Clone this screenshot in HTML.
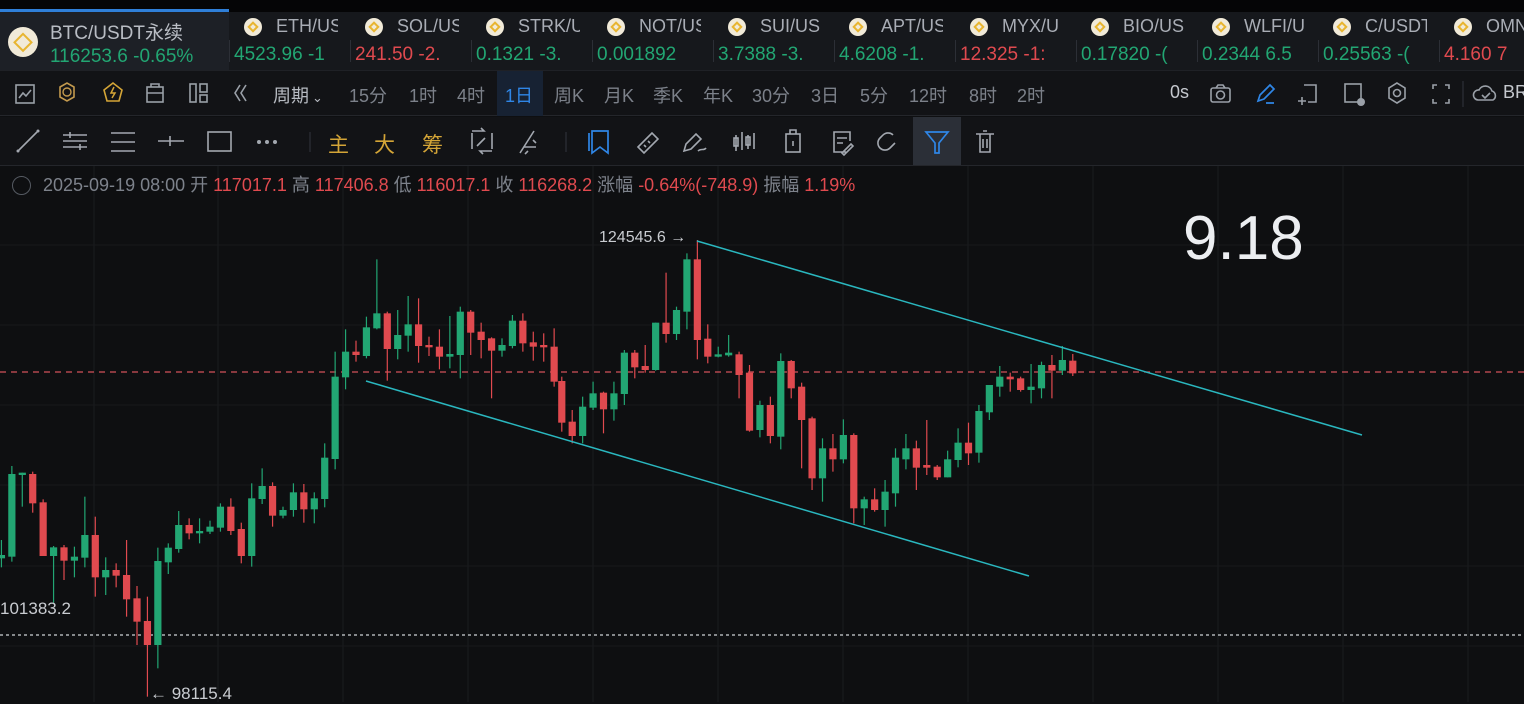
<!DOCTYPE html>
<html><head><meta charset="utf-8"><style>
*{margin:0;padding:0;box-sizing:border-box}
body{width:1524px;height:702px;overflow:hidden;background:#0e0f11;font-family:"Liberation Sans","Noto Sans CJK SC",sans-serif;color:#8b9099;position:relative}
.abs{position:absolute;white-space:nowrap}
#tabs{position:absolute;left:0;top:12px;width:1524px;height:58px;background:#16181c}
.tab{position:absolute;top:0;height:58px;overflow:hidden}
.tab .n{position:absolute;top:4px;font-size:18px;color:#a9adb5}
.tab .v{position:absolute;top:32px;font-size:19px}
.coin{position:absolute;border-radius:50%;background:#f1ead8}
.coin:after{content:"";position:absolute;left:50%;top:50%;width:45%;height:45%;transform:translate(-50%,-50%) rotate(45deg);border:2px solid #e8b530;box-sizing:border-box}
.sep{position:absolute;width:1px;background:#2c2f36}
.g{color:#22a673}.r{color:#e04a4f}
#row2{position:absolute;top:70px;left:0;width:1524px;height:46px;background:#121316;border-top:1px solid #1f2126;border-bottom:1px solid #24262b}
#row2 .t{position:absolute;top:11px;font-size:18px;color:#7c818a}
#row3{position:absolute;top:117px;left:0;width:1524px;height:49px;background:#121316;border-bottom:1px solid #24262b}
.ic{position:absolute}
</style></head><body>
<div class="abs" style="left:0;top:0;width:1524px;height:12px;background:#050506"></div>
<div id="tabs">
 <div class="tab" style="left:0;width:229px;background:#1d2026;border-top:3px solid #2f7fd8;top:-3px;height:61px">
  <div class="coin" style="left:8px;top:15px;width:30px;height:30px"></div>
  <div class="n" style="left:50px;top:6px;font-size:19px;color:#b9bdc4">BTC/USDT永续</div>
  <div class="v g" style="left:50px;top:34px">116253.6 -0.65%</div>
 </div>
</div>
<div id="row2"><div class="abs" style="left:497px;top:0;width:46px;height:45px;background:#172233"></div></div>
<div id="row3"><div class="abs" style="left:913px;top:0;width:48px;height:48px;background:#2b2f37"></div></div>
<svg id="chart" class="abs" style="left:0;top:166px" width="1524" height="536"></svg>
<div class="abs" style="left:12px;top:171px;font-size:18px;color:#7d828b"><span style="display:inline-block;width:19px;height:19px;border:1.5px solid #555a62;border-radius:50%;vertical-align:-4px;margin-right:12px"></span>2025-09-19 08:00 开 <span class="r">117017.1</span> 高 <span class="r">117406.8</span> 低 <span class="r">116017.1</span> 收 <span class="r">116268.2</span> 涨幅 <span class="r">-0.64%(-748.9)</span> 振幅 <span class="r">1.19%</span></div>
<div class="abs" style="left:599px;top:229px;font-size:16px;color:#c9ccd1">124545.6 →</div>
<div class="abs" style="left:0;top:599px;font-size:17px;color:#c9ccd1">101383.2</div>
<div class="abs" style="left:150px;top:684px;font-size:17px;color:#c9ccd1">← 98115.4</div>
<div class="abs" style="left:1183px;top:203px;font-size:62px;color:#eceef1">9.18</div>
<script>
var tabs=[["ETH/US","4523.96 -1","g"],["SOL/US","241.50 -2.","r"],["STRK/U","0.1321 -3.","g"],["NOT/US","0.001892","g"],["SUI/US","3.7388 -3.","g"],["APT/US","4.6208 -1.","g"],["MYX/U","12.325 -1:","r"],["BIO/US","0.17820 -(","g"],["WLFI/U","0.2344 6.5","g"],["C/USDT","0.25563 -(","g"],["OMN","4.160 7","r"]];
var T=document.getElementById('tabs'),h='';
tabs.forEach(function(t,i){var x=230+i*121;
h+='<div class="sep" style="left:'+(x-1)+'px;top:28px;height:22px"></div><div class="tab" style="left:'+x+'px;width:108px"><div class="coin" style="left:14px;top:6px;width:18px;height:18px"></div><div class="n" style="left:46px">'+t[0]+'</div><div class="v '+t[2]+'" style="left:4px">'+t[1]+'</div></div>';});
T.innerHTML+=h;
var R2=document.getElementById('row2');h='';
var tx=[["15分",349],["1时",409],["4时",457],["1日",505],["周K",554],["月K",604],["季K",653],["年K",703],["30分",752],["3日",811],["5分",860],["12时",909],["8时",969],["2时",1017],["0s",1170]];
tx.forEach(function(t){h+='<div class="t" style="left:'+t[1]+'px;'+(t[0]=="1日"?'color:#2f86e6':(t[0]=="0s"?'color:#c5c8ce':''))+'">'+t[0]+'</div>';});
h+='<div class="t" style="left:273px;color:#b7bbc2">周期<span style="font-size:13px;margin-left:3px">⌄</span></div>';
var s='stroke="#9aa0a8" stroke-width="1.6" fill="none"';
h+='<svg class="ic" style="left:0;top:0" width="1524" height="46">'+
'<rect x="16" y="14" width="18" height="18" '+s+'/><path d="M19 27l4-5 3 3 5-6" '+s+'/>'+
'<path d="M60 16l7-4 7 4v10l-7 4-7-4z" stroke="#c39a4e" stroke-width="1.6" fill="none"/><circle cx="67" cy="21" r="4" stroke="#c39a4e" fill="none" stroke-width="1.4"/>'+
'<path d="M104 19l9-7 9 7-3 11h-12z" stroke="#d4a537" stroke-width="1.6" fill="none"/><path d="M114 16l-3 6h4l-3 5" stroke="#d4a537" stroke-width="1.5" fill="none"/>'+
'<rect x="147" y="16" width="16" height="15" '+s+'/><path d="M147 22h16M151 16v-3h8v3" '+s+'/>'+
'<rect x="190" y="13" width="6" height="18" '+s+'/><rect x="200" y="13" width="7" height="8" '+s+'/><rect x="200" y="24" width="7" height="7" '+s+'/>'+
'<path d="M240 14l-5 8 5 8M246 14l-5 8 5 8" '+s+'/>'+
'<rect x="1211" y="17" width="19" height="14" rx="2" '+s+'/><circle cx="1220.5" cy="24" r="4" '+s+'/><path d="M1216 17l2-3h5l2 3" '+s+'/>'+
'<path d="M1258 30l2-6 10-10 4 4-10 10zM1266 32h8" stroke="#2f86e6" stroke-width="1.7" fill="none"/>'+
'<path d="M1304 14h12v17h-8M1302 26v8M1298 30h8" '+s+'/>'+
'<rect x="1345" y="13" width="16" height="18" '+s+'/><circle cx="1361" cy="31" r="4" fill="#9aa0a8"/>'+
'<path d="M1397 12l8 5v10l-8 5-8-5v-10z" '+s+'/><circle cx="1397" cy="22" r="3.5" '+s+'/>'+
'<path d="M1433 18v-4h4M1445 14h4v4M1449 28v4h-4M1437 32h-4v-4" '+s+'/>'+
'<line x1="1463" y1="10" x2="1463" y2="36" stroke="#33363d"/>'+
'<path d="M1478 29a5 5 0 0 1 1-10 7 7 0 0 1 13 1 5 5 0 0 1 1 9z" '+s+'/><path d="M1482 24l3 3 5-5" '+s+'/>'+
'</svg><div class="t" style="left:1503px;color:#c5c8ce">BR</div>';
R2.innerHTML+=h;
var R3=document.getElementById('row3');
var s3='stroke="#a3a8b0" stroke-width="1.6" fill="none"';
h='<svg class="ic" style="left:0;top:0" width="1100" height="48">'+
'<path d="M18 34l20-20" '+s3+'/><circle cx="18" cy="34" r="1.5" fill="#a3a8b0"/><circle cx="38" cy="14" r="1.5" fill="#a3a8b0"/>'+
'<path d="M63 18h24M63 24h24M63 30h24M70 15v6M80 27v6" '+s3+'/>'+
'<path d="M111 16h24M111 25h24M111 34h24" '+s3+'/>'+
'<path d="M158 24h26M170 19v10" '+s3+'/>'+
'<rect x="208" y="15" width="23" height="19" '+s3+'/>'+
'<circle cx="259" cy="25" r="2" fill="#a3a8b0"/><circle cx="267" cy="25" r="2" fill="#a3a8b0"/><circle cx="275" cy="25" r="2" fill="#a3a8b0"/>'+
'<line x1="310" y1="15" x2="310" y2="35" stroke="#33363d"/>'+
'<path d="M472 14h12l-3-3M492 34h-12l3 3M472 16v16M492 32v-16M477 29l8-8" '+s3+'/>'+
'<path d="M520 36l14-22M524 30h12M528 34l-3 3M536 26l-3-3" '+s3+'/>'+
'<line x1="566" y1="15" x2="566" y2="35" stroke="#33363d"/>'+
'<path d="M592 14h16v22l-8-6-8 6z" stroke="#2f86e6" stroke-width="1.7" fill="none"/><path d="M589 16v18" stroke="#2f86e6" stroke-width="1.7"/>'+
'<path d="M638 30l14-14 6 6-14 14zM644 28l2 2M648 24l2 2" '+s3+'/>'+
'<path d="M684 34l2-7 10-10 5 5-10 10zM698 34c3-3 6 0 8-3" '+s3+'/>'+
'<path d="M736 18v16M742 15v18M748 18v14M754 16v16" '+s3+'/><rect x="734" y="21" width="4" height="8" '+s3+'/><rect x="746" y="20" width="4" height="8" '+s3+'/>'+
'<rect x="786" y="17" width="14" height="18" '+s3+'/><path d="M790 17v-4h6v4M793 24v5" '+s3+'/>'+
'<path d="M846 35h-12v-20h16v9M837 21h10M837 26h6M842 36l9-9 2 2-9 9z" '+s3+'/>'+
'<path d="M893 18a7 7 0 0 0-10 0l-3 3a7 7 0 0 0 10 10l5-5" '+s3+'/>'+
'<path d="M926 15h22l-9 11v10h-4v-10z" stroke="#2f86e6" stroke-width="1.7" fill="none"/>'+
'<path d="M976 17h18M980 17v18h10v-18M983 14h4M983 22v9M987 22v9" '+s3+'/>'+
'</svg>'+
'<div class="abs" style="left:328px;top:12px;font-size:21px;color:#d4a537">主</div><div class="abs" style="left:374px;top:12px;font-size:21px;color:#d4a537">大</div><div class="abs" style="left:422px;top:12px;font-size:21px;color:#d4a537">筹</div>';
R3.innerHTML+=h;
var C=document.getElementById('chart'),o='';var OY=166;
[94,218,343,468,593,718,843,968,1093,1218,1343,1468].forEach(function(x){o+='<line x1="'+x+'" y1="0" x2="'+x+'" y2="536" stroke="#1b1c20"/>';});
[245,325,405,485,566,646].forEach(function(y){o+='<line x1="0" y1="'+(y-OY)+'" x2="1524" y2="'+(y-OY)+'" stroke="#18191c"/>';});
o+='<line x1="0" y1="'+(372-OY)+'" x2="1524" y2="'+(372-OY)+'" stroke="#d2525a" stroke-dasharray="6 5" stroke-width="1.2"/>';
o+='<line x1="0" y1="'+(635-OY)+'" x2="1524" y2="'+(635-OY)+'" stroke="#cfd2d6" stroke-dasharray="3 3" stroke-width="1.2"/>';
var z3=[[975,985,930,1012,1],[732,980,708,995,1],[728,735,728,830,1],[732,820,725,848,0],[817,978,808,978,0],[952,978,948,1118,1],[952,992,945,1050,0],[980,992,950,1042,1],[915,983,800,1012,1],[915,1042,860,1100,0],[1020,1042,982,1095,1],[1020,1037,1000,1072,0],[1035,1108,930,1160,0],[1105,1175,1068,1245,0],[1173,1245,1100,1400,0],[993,1245,953,1315,1],[953,997,940,1032,1],[885,957,843,968,1],[885,910,865,928,0],[903,910,865,940,1],[890,905,872,912,1],[830,893,820,905,1],[830,903,805,915,0],[897,978,878,1000,0],[805,978,760,1010,1],[768,807,715,822,1],[768,857,757,890,0],[840,857,830,865,1],[787,840,760,860,1],[787,838,762,878,0],[805,838,787,880,1],[683,807,640,832,1],[440,687,365,718,1],[365,442,298,478,1],[365,375,332,395,0],[292,378,260,385,1],[250,295,88,298,1],[250,357,245,452,0],[315,357,240,388,1],[283,317,198,365,1],[283,348,205,398,0],[345,352,320,378,0],[350,380,298,418,0],[372,380,258,415,1],[245,375,230,445,1],[245,308,240,375,0],[305,330,278,385,0],[325,362,322,505,0],[345,362,325,380,1],[272,348,255,355,1],[272,340,250,365,0],[337,350,305,392,0],[345,352,310,395,0],[350,455,295,470,0]];
var z4=[[453,578,440,605,0],[575,618,540,640,0],[530,618,500,640,1],[490,533,455,540,1],[488,538,485,610,0],[490,538,455,572,1],[368,492,360,525,1],[368,412,360,445,0],[408,420,345,428,0],[278,420,278,422,1],[278,312,128,338,0],[240,312,230,330,1],[88,245,70,298,1],[88,330,30,388,0],[326,380,283,400,0],[373,380,350,382,1],[368,376,315,380,1],[373,435,365,505,0],[428,602,405,605,0],[525,600,512,622,1],[525,618,500,640,0],[393,620,370,658,1],[393,475,390,505,0],[470,570,458,715,0],[565,745,560,780,0],[655,745,625,815,1],[655,688,612,725,0],[615,688,568,700,1],[615,835,610,880,0],[808,835,800,885,1],[808,840,775,845,0],[785,840,750,890,1],[683,790,655,830,1],[655,688,612,718,1],[655,713,632,780,0],[705,713,570,735,0],[710,742,705,750,0],[688,742,662,742,1],[638,690,595,712,1],[638,670,578,705,0],[543,668,525,698,1],[465,547,465,570,1],[440,470,408,500,1],[440,448,428,485,0],[445,480,440,485,0],[470,480,402,520,1],[405,475,395,505,1],[405,422,375,505,0],[390,422,348,435,1],[392,430,372,438,0]];
function cd(x,c){var col=c[4]?'#22a673':'#e04a4f';var y=function(v){return 230+v/3-OY};var bt=y(c[0]),bb=y(c[1]);if(bb-bt<2)bb=bt+2;
o+='<line x1="'+x+'" y1="'+y(c[2])+'" x2="'+x+'" y2="'+y(c[3])+'" stroke="'+col+'" stroke-width="1.2"/><rect x="'+(x-3.6)+'" y="'+bt+'" width="7.2" height="'+(bb-bt)+'" fill="'+col+'"/>';}
z3.forEach(function(c,i){cd((4+29.2*i)/2.8,c);});
z4.forEach(function(c,i){cd(540+(61+29.2*i)/2.8,c);});
o+='<line x1="697" y1="'+(241-OY)+'" x2="1362" y2="'+(435-OY)+'" stroke="#2ab7bf" stroke-width="1.5"/>';
o+='<line x1="366" y1="'+(381-OY)+'" x2="1029" y2="'+(576-OY)+'" stroke="#2ab7bf" stroke-width="1.5"/>';
C.innerHTML=o;
</script>
</body></html>
